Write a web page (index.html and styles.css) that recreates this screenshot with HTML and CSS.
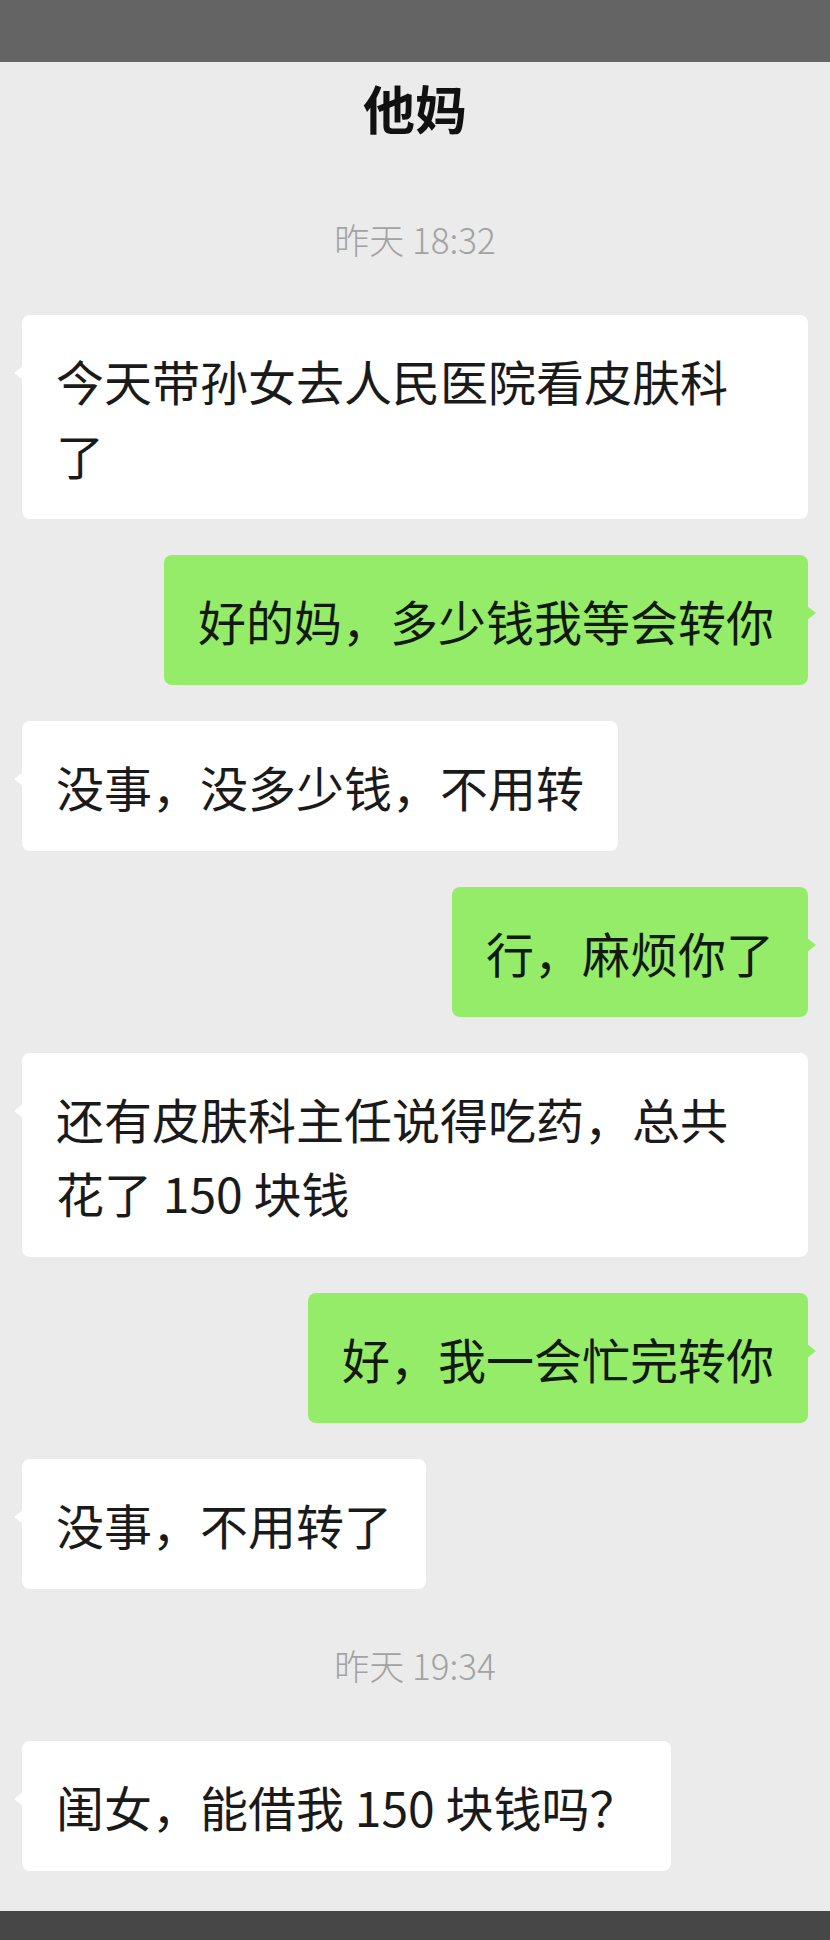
FILE: index.html
```html
<!DOCTYPE html>
<html lang="zh-CN">
<head>
	<meta charset="utf-8">
	<meta name="viewport" content="width=device-width, initial-scale=1">
	<title>他妈</title>
	<link rel="stylesheet" href="styles.css">
</head>
<body>
	<div class="phone">
		<div class="topbar"></div>
		<header class="title">他妈</header>
		<main class="chat">
			<div class="time">昨天 18:32</div>
			<div class="row left"><div class="bubble">今天带孙女去人民医院看皮肤科了</div></div>
			<div class="row right"><div class="bubble">好的妈，多少钱我等会转你</div></div>
			<div class="row left"><div class="bubble">没事，没多少钱，不用转</div></div>
			<div class="row right"><div class="bubble">行，麻烦你了</div></div>
			<div class="row left"><div class="bubble">还有皮肤科主任说得吃药，总共花了 150 块钱</div></div>
			<div class="row right"><div class="bubble">好，我一会忙完转你</div></div>
			<div class="row left"><div class="bubble">没事，不用转了</div></div>
			<div class="time">昨天 19:34</div>
			<div class="row left"><div class="bubble">闺女，能借我 150 块钱吗？</div></div>
		</main>
		<div class="bottombar"></div>
	</div>
</body>
</html>
```

FILE: styles.css
```css
*{
	margin: 0;
	box-sizing: border-box;
}
body{
	background-color: #ebebeb;
	font-family: "Noto Sans CJK SC", "Noto Sans", sans-serif;
	color: #1a1a1a;
}
.phone{
	display: flex;
	flex-direction: column;
	height: 100vh;
}
.topbar{
	flex: none;
	height: 62px;
	background-color: #646464;
}
.title{
	flex: none;
	height: 92px;
	line-height: 92px;
	text-align: center;
	font-size: 52px;
	font-weight: 700;
	color: #111;
}
.chat{
	flex: 1;
	min-height: 0;
	overflow: hidden;
	display: flex;
	flex-direction: column;
	gap: 36px;
	padding: 45px 22px 0;
}
.time{
	margin: 20px 0;
	line-height: 40px;
	text-align: center;
	font-size: 35px;
	font-weight: 300;
	color: #a2a2a2;
}
.row{
	display: flex;
}
.row.right{
	justify-content: flex-end;
}
.bubble{
	position: relative;
	max-width: 786px;
	padding: 28px 34px;
	border-radius: 8px;
	background-color: #fff;
	font-size: 48px;
	line-height: 74px;
}
.bubble::before{
	content: "";
	position: absolute;
	top: 51px;
	left: -8px;
	border-top: 7px solid transparent;
	border-bottom: 7px solid transparent;
	border-right: 9px solid #fff;
}
.right .bubble{
	background-color: #95ec69;
	color: #121a0e;
}
.right .bubble::before{
	left: auto;
	right: -8px;
	border-right: none;
	border-left: 9px solid #95ec69;
}
.bottombar{
	flex: none;
	height: 29px;
	background-color: #474747;
}
```
